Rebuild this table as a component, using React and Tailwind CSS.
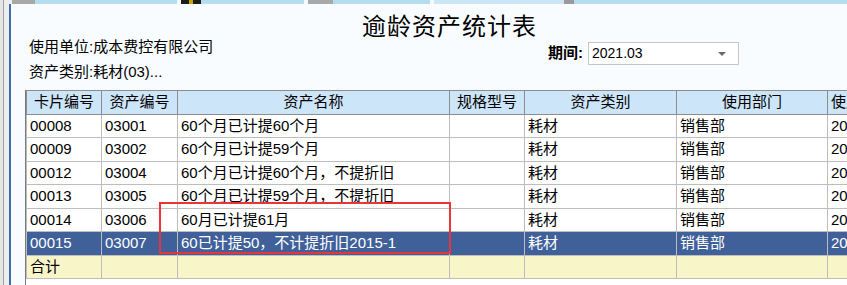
import React from 'react'

const font = { fontFamily: '"Liberation Sans", "Noto Sans CJK SC", sans-serif' }

const rows = [
  { card: '00008', code: '03001', name: '60个月已计提60个月', cat: '耗材', dept: '销售部', date: '2015' },
  { card: '00009', code: '03002', name: '60个月已计提59个月', cat: '耗材', dept: '销售部', date: '2015' },
  { card: '00012', code: '03004', name: '60个月已计提60个月，不提折旧', cat: '耗材', dept: '销售部', date: '2015' },
  { card: '00013', code: '03005', name: '60个月已计提59个月，不提折旧', cat: '耗材', dept: '销售部', date: '2015' },
  { card: '00014', code: '03006', name: '60月已计提61月', cat: '耗材', dept: '销售部', date: '2015' },
  { card: '00015', code: '03007', name: '60已计提50，不计提折旧2015-1', cat: '耗材', dept: '销售部', date: '2015', selected: true },
]

const cols = ['卡片编号', '资产编号', '资产名称', '规格型号', '资产类别', '使用部门', '使用日期']
const widths = ['w-[75px]', 'w-[76px]', 'w-[272px]', 'w-[75px]', 'w-[152px]', 'w-[151px]', 'w-[110px]']

function TabStrip() {
  return (
    <div className="flex h-[4px] shrink-0 bg-[#b6dcef]">
      <div className="w-[3px] bg-[#e6e6e6]" />
      <div className="w-[1px] bg-[#a0a0a0]" />
      <div className="w-[8px] bg-[#eeeeee]" />
      <div className="w-[23px] bg-[#a8a8a8]" />
      <div className="w-[142px]" />
      <div className="w-[4px] bg-[#f4f9fc]" />
      <div className="w-[8px] bg-[#1b1b1b]" />
      <div className="w-[4px] bg-[#c8a000]" />
      <div className="w-[8px] bg-[#1b1b1b]" />
      <div className="w-[103px]" />
      <div className="w-[4px] bg-[#f4f9fc]" />
      <div className="w-[25px] bg-[#a8a8a8]" />
      <div className="w-[97px]" />
      <div className="w-[4px] bg-[#f4f9fc]" />
      <div className="w-[130px] bg-[#cbe7f5]" />
      <div className="w-[10px] bg-[#9a9a9a]" />
      <div className="flex-1" />
    </div>
  )
}

function Cell({ children, className = '' }) {
  return (
    <td className={`h-[23px] border border-[#bdbdbd] px-[3px] py-0 whitespace-nowrap overflow-hidden ${className}`}>
      {children}
    </td>
  )
}

export default function App() {
  return (
    <div className="relative w-[847px] h-[285px] overflow-hidden flex flex-col bg-[#f8fcff] text-black" style={font}>
      <TabStrip />
      <div className="flex flex-1 min-h-0">
        {/* left gutter */}
        <div className="flex shrink-0">
          <div className="w-[3px] bg-[#e6e6e6]" />
          <div className="w-[1px] bg-[#a0a0a0]" />
          <div className="w-[5px] bg-[#eeeeee]" />
          <div className="w-[2px] bg-[#3d6fb0]" />
        </div>

        <div className="flex-1 min-w-0 flex flex-col">
          <div className="mt-[12px] ml-[351px] h-[22px] leading-[22px] text-[24px] tracking-[1px] whitespace-nowrap">
            逾龄资产统计表
          </div>

          <div className="flex">
            <div className="w-[537px] shrink-0 pl-[18px] text-[15px]">
              <div className="leading-[18px] whitespace-nowrap">使用单位:成本费控有限公司</div>
              <div className="mt-[7px] leading-[18px] whitespace-nowrap">资产类别:耗材(03)...</div>
            </div>
            <div className="flex items-center mt-[4px] h-[23px] self-start">
              <span className="text-[15px] font-bold mr-[5px] whitespace-nowrap">期间:</span>
              <div className="w-[151px] h-[23px] border border-[#c6c6c6] bg-white flex items-center justify-between pl-[3px] pr-[12px] text-[14px]">
                <span>2021.03</span>
                <span className="w-0 h-0 border-l-[4px] border-r-[4px] border-t-[4px] border-l-transparent border-r-transparent border-t-[#6a6a6a]" />
              </div>
            </div>
          </div>

          <div className="mt-[9px] ml-[14px] flex-1 border-l border-[#7a7a7a] bg-white overflow-hidden">
            <table className="border-collapse table-fixed w-[911px] text-[15px]">
              <thead>
                <tr className="bg-[#cde5f8]">
                  {cols.map((c, i) => (
                    <th
                      key={c}
                      className={`${widths[i]} h-[23px] border border-[#8c8c8c] font-normal text-center whitespace-nowrap overflow-hidden p-0 ${i === 6 ? 'text-left pl-[3px]' : ''}`}
                    >
                      {c}
                    </th>
                  ))}
                </tr>
              </thead>
              <tbody>
                {rows.map(r => (
                  <tr key={r.card} className={r.selected ? 'bg-[#40609a] text-white' : 'bg-white'}>
                    <Cell>{r.card}</Cell>
                    <Cell>{r.code}</Cell>
                    <Cell>{r.name}</Cell>
                    <Cell></Cell>
                    <Cell>{r.cat}</Cell>
                    <Cell>{r.dept}</Cell>
                    <Cell>{r.date}</Cell>
                  </tr>
                ))}
                <tr className="bg-[#f8f6c9]">
                  <Cell>合计</Cell>
                  <Cell></Cell>
                  <Cell></Cell>
                  <Cell></Cell>
                  <Cell></Cell>
                  <Cell></Cell>
                  <Cell></Cell>
                </tr>
              </tbody>
            </table>
          </div>
        </div>
      </div>

      {/* annotation box */}
      <div className="absolute left-[159px] top-[202px] w-[292px] h-[52px] border-2 border-[#e8343a]" />
    </div>
  )
}
